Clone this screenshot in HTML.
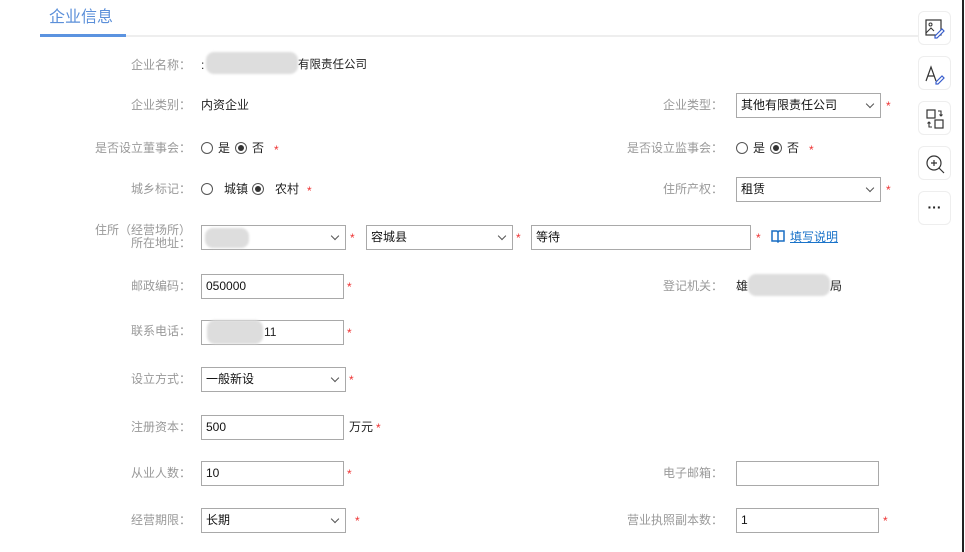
<!DOCTYPE html>
<html><head><meta charset="utf-8"><style>
*{margin:0;padding:0;box-sizing:border-box}
body{width:965px;height:552px;background:#fff;position:relative;overflow:hidden;font-family:"Liberation Sans","Noto Sans CJK SC",sans-serif;font-size:12px;color:#222}
.a{position:absolute;white-space:nowrap;line-height:14px}
.l{position:absolute;color:#999;text-align:right;line-height:14px}
.s{position:absolute;color:#e33;font-size:12px;line-height:14px}
.in{position:absolute;height:25px;border:1px solid #a9a9a9;background:#fff;line-height:23px;padding-left:4px;color:#111}
.sel{position:absolute;height:25px;border:1px solid #a9a9a9;background:#fff;line-height:23px;padding-left:4px;color:#111}
.sel:after{content:"";position:absolute;right:7px;top:7px;width:5px;height:5px;border-right:1px solid #555;border-bottom:1px solid #555;transform:rotate(45deg)}
.r{position:absolute;width:12px;height:12px;border:1px solid #555;border-radius:50%}
.r.on:after{content:"";position:absolute;left:2px;top:2px;width:6px;height:6px;border-radius:50%;background:#333}
.blur{position:absolute;background:#ddd;border-radius:8px;filter:blur(1px)}
.btn{position:absolute;left:918px;width:33px;height:34px;border:1px solid #eee;border-radius:6px;background:#fff}
</style></head><body>
<div class="a" style="left:49px;top:9px;font-size:16px;line-height:18px;color:#5b8fd9">企业信息</div>
<div class="a" style="left:40px;top:34px;width:86px;height:3px;background:#5b93e0"></div>
<div class="a" style="left:126px;top:35px;width:800px;height:2px;background:#eee"></div>
<div class="a" style="left:962px;top:0;width:2px;height:552px;background:#222"></div>

<div class="btn" style="top:11px"><svg width="33" height="34"><rect x="7" y="8" width="15" height="15" fill="none" stroke="#333" stroke-width="1.2"/><circle cx="11.5" cy="12.5" r="1.5" fill="none" stroke="#333"/><path d="M7 21l5-5 3 3" fill="none" stroke="#333"/><path d="M16 24l7-7 2 2-7 7h-2z" fill="#fff" stroke="#3a5fcd" stroke-width="1.2"/></svg></div>
<div class="btn" style="top:56px"><svg width="33" height="34"><path d="M7 24l5-14 5 14M9 19h6" fill="none" stroke="#333" stroke-width="1.2"/><path d="M17 25l6-6 2 2-6 6h-2z" fill="#fff" stroke="#3a5fcd" stroke-width="1.2"/></svg></div>
<div class="btn" style="top:101px"><svg width="33" height="34"><rect x="8" y="8" width="8" height="8" fill="none" stroke="#333" stroke-width="1.2"/><rect x="16" y="18" width="8" height="8" fill="none" stroke="#333" stroke-width="1.2"/><path d="M19 9h3v5M20.5 12.5l1.5 1.5 1.5-1.5M13 25h-3v-5M8.5 21.5l1.5-1.5 1.5 1.5" fill="none" stroke="#333" stroke-width="1.1"/></svg></div>
<div class="btn" style="top:146px"><svg width="33" height="34"><circle cx="15" cy="16" r="7" fill="none" stroke="#333" stroke-width="1.2"/><path d="M20 21l5 5M12 16h6M15 13v6" stroke="#333" stroke-width="1.2"/></svg></div>
<div class="btn" style="top:191px;text-align:center;line-height:30px;font-size:14px;font-weight:bold">···</div>

<div class="l" style="left:90px;top:58px;width:101px">企业名称：</div>
<div class="a" style="left:201px;top:58px">:</div>
<div class="blur" style="left:206px;top:52px;width:92px;height:22px"></div>
<div class="a" style="left:298px;top:58px;font-size:11.5px">有限责任公司</div>

<div class="l" style="left:90px;top:98px;width:101px">企业类别：</div>
<div class="a" style="left:201px;top:98px">内资企业</div>

<div class="l" style="left:60px;top:141px;width:131px">是否设立董事会：</div>
<div class="r" style="left:201px;top:142px"></div><div class="a" style="left:218px;top:141px">是</div>
<div class="r on" style="left:235px;top:142px"></div><div class="a" style="left:252px;top:141px">否</div>
<div class="s" style="left:274px;top:143px">*</div>

<div class="l" style="left:90px;top:182px;width:101px">城乡标记：</div>
<div class="r" style="left:201px;top:183px"></div><div class="a" style="left:224px;top:182px">城镇</div>
<div class="r on" style="left:252px;top:183px"></div><div class="a" style="left:275px;top:182px">农村</div>
<div class="s" style="left:307px;top:184px">*</div>

<div class="l" style="left:90px;top:224px;width:101px;line-height:13px">住所（经营场所）<br>所在地址：</div>
<div class="sel" style="left:201px;top:225px;width:145px"></div>
<div class="blur" style="left:205px;top:228px;width:44px;height:20px"></div>
<div class="s" style="left:350px;top:231px">*</div>
<div class="sel" style="left:366px;top:225px;width:147px">容城县</div>
<div class="s" style="left:516px;top:231px">*</div>
<div class="in" style="left:531px;top:225px;width:220px">等待</div>
<div class="s" style="left:756px;top:231px">*</div>
<svg class="a" style="left:771px;top:230px" width="14" height="13"><path d="M1 1h5l1 1 1-1h5v10H8l-1 1-1-1H1z" fill="none" stroke="#1a6fc4" stroke-width="1.5"/><path d="M7 2v9" stroke="#1a6fc4" stroke-width="1.5"/></svg>
<div class="a" style="left:790px;top:230px;color:#1a73c9;text-decoration:underline">填写说明</div>

<div class="l" style="left:90px;top:279px;width:101px">邮政编码：</div>
<div class="in" style="left:201px;top:274px;width:143px">050000</div>
<div class="s" style="left:347px;top:280px">*</div>

<div class="l" style="left:90px;top:324px;width:101px">联系电话：</div>
<div class="in" style="left:201px;top:320px;width:143px"></div>
<div class="blur" style="left:207px;top:320px;width:56px;height:24px"></div>
<div class="a" style="left:264px;top:325px">11</div>
<div class="s" style="left:347px;top:326px">*</div>

<div class="l" style="left:90px;top:372px;width:101px">设立方式：</div>
<div class="sel" style="left:201px;top:367px;width:145px">一般新设</div>
<div class="s" style="left:349px;top:373px">*</div>

<div class="l" style="left:90px;top:420px;width:101px">注册资本：</div>
<div class="in" style="left:201px;top:415px;width:143px">500</div>
<div class="a" style="left:349px;top:420px">万元</div>
<div class="s" style="left:376px;top:421px">*</div>

<div class="l" style="left:90px;top:466px;width:101px">从业人数：</div>
<div class="in" style="left:201px;top:461px;width:143px">10</div>
<div class="s" style="left:347px;top:467px">*</div>

<div class="l" style="left:90px;top:513px;width:101px">经营期限：</div>
<div class="sel" style="left:201px;top:508px;width:145px">长期</div>
<div class="s" style="left:355px;top:514px">*</div>

<div class="l" style="left:600px;top:98px;width:123px">企业类型：</div>
<div class="sel" style="left:736px;top:93px;width:145px">其他有限责任公司</div>
<div class="s" style="left:886px;top:99px">*</div>

<div class="l" style="left:600px;top:141px;width:123px">是否设立监事会：</div>
<div class="r" style="left:736px;top:142px"></div><div class="a" style="left:753px;top:141px">是</div>
<div class="r on" style="left:770px;top:142px"></div><div class="a" style="left:787px;top:141px">否</div>
<div class="s" style="left:809px;top:143px">*</div>

<div class="l" style="left:600px;top:182px;width:123px">住所产权：</div>
<div class="sel" style="left:736px;top:177px;width:145px">租赁</div>
<div class="s" style="left:886px;top:183px">*</div>

<div class="l" style="left:600px;top:279px;width:123px">登记机关：</div>
<div class="a" style="left:736px;top:279px">雄</div>
<div class="blur" style="left:748px;top:274px;width:82px;height:22px"></div>
<div class="a" style="left:830px;top:279px">局</div>

<div class="l" style="left:600px;top:466px;width:123px">电子邮箱：</div>
<div class="in" style="left:736px;top:461px;width:143px"></div>

<div class="l" style="left:600px;top:513px;width:123px">营业执照副本数：</div>
<div class="in" style="left:736px;top:508px;width:143px">1</div>
<div class="s" style="left:883px;top:514px">*</div>
</body></html>
